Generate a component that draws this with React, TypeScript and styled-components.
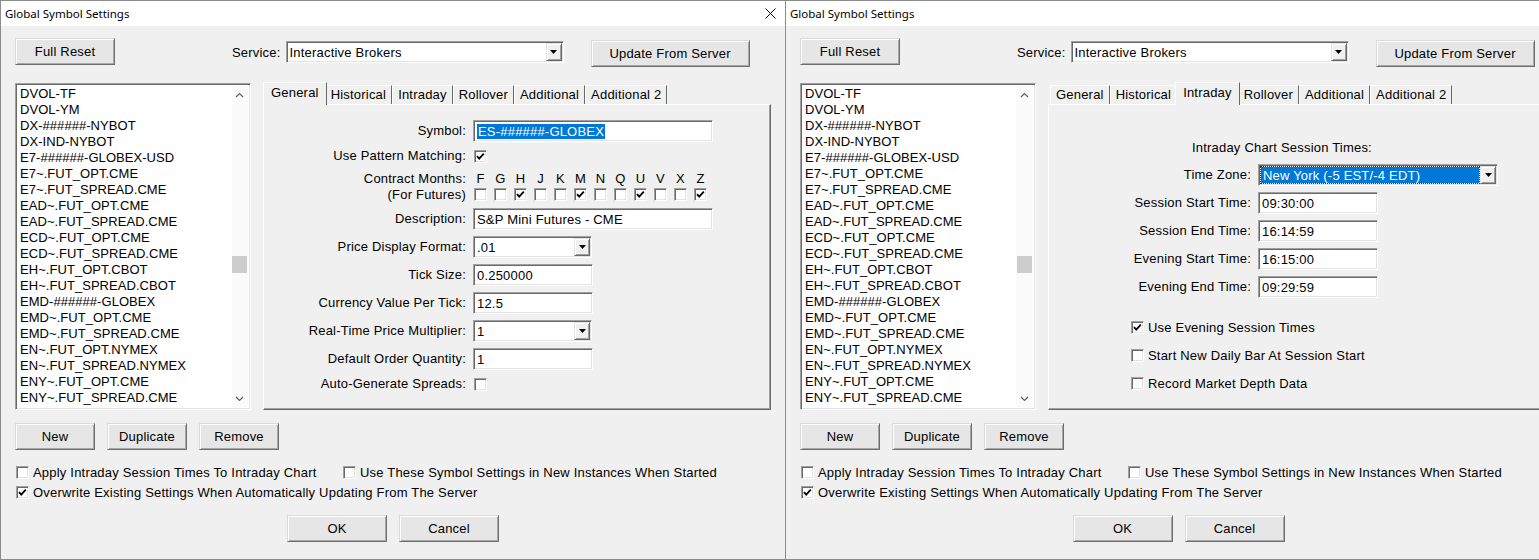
import styled, { createGlobalStyle } from "styled-components";

const GlobalStyle = createGlobalStyle`
  html, body {
    margin: 0;
    padding: 0;
    background: #f0f0f0;
    overflow: hidden;
  }
  body {
    font-family: "Liberation Sans", Arial, sans-serif;
    font-size: 13px;
    letter-spacing: 0.2px;
    color: #000;
  }
`;

const SYMBOLS = [
  "DVOL-TF",
  "DVOL-YM",
  "DX-######-NYBOT",
  "DX-IND-NYBOT",
  "E7-######-GLOBEX-USD",
  "E7~.FUT_OPT.CME",
  "E7~.FUT_SPREAD.CME",
  "EAD~.FUT_OPT.CME",
  "EAD~.FUT_SPREAD.CME",
  "ECD~.FUT_OPT.CME",
  "ECD~.FUT_SPREAD.CME",
  "EH~.FUT_OPT.CBOT",
  "EH~.FUT_SPREAD.CBOT",
  "EMD-######-GLOBEX",
  "EMD~.FUT_OPT.CME",
  "EMD~.FUT_SPREAD.CME",
  "EN~.FUT_OPT.NYMEX",
  "EN~.FUT_SPREAD.NYMEX",
  "ENY~.FUT_OPT.CME",
  "ENY~.FUT_SPREAD.CME",
  "EOE-######-FTA-EUR-23",
];

const TABS = ["General", "Historical", "Intraday", "Rollover", "Additional", "Additional 2"];

const MONTHS = ["F", "G", "H", "J", "K", "M", "N", "Q", "U", "V", "X", "Z"];
const CHECKED_MONTHS = ["H", "M", "U", "Z"];

const Page = styled.div`
  display: flex;
  width: 1539px;
  height: 560px;
  overflow: hidden;
`;

const Window = styled.div<{ $first?: boolean }>`
  flex: 0 0 auto;
  width: 786px;
  height: 560px;
  box-sizing: border-box;
  border: 1px solid #8c8c8c;
  border-left: ${(p) => (p.$first ? "1px solid #8c8c8c" : "none")};
  background: #f0f0f0;
  display: flex;
  flex-direction: column;
`;

const TitleBar = styled.div`
  height: 25px;
  flex: 0 0 auto;
  background: #fff;
  display: flex;
  align-items: center;
  justify-content: space-between;
  padding: 0 9px 0 4px;
  font-family: "Noto Sans", "Liberation Sans", sans-serif;
  font-size: 11.5px;
  letter-spacing: 0;
`;

const CloseIcon = styled.svg`
  width: 11px;
  height: 11px;
  display: block;
`;

const Body = styled.div`
  flex: 1;
  display: flex;
  flex-direction: column;
  padding: 12px 14px 0 14px;
`;

const TopRow = styled.div`
  display: flex;
  align-items: flex-start;
  height: 29px;
`;

const Button = styled.button<{ $w: number; $mt?: number; $ml?: number }>`
  width: ${(p) => p.$w}px;
  height: 27px;
  margin: ${(p) => p.$mt ?? 0}px 0 0 ${(p) => p.$ml ?? 0}px;
  padding: 0;
  flex: 0 0 auto;
  box-sizing: border-box;
  font-family: "Liberation Sans", Arial, sans-serif;
  font-size: 13px;
  letter-spacing: 0.2px;
  color: #000;
  background: #e6e6e6;
  border: 1px solid;
  border-color: #dadada #6e6e6e #6e6e6e #dadada;
  box-shadow: inset 1px 1px #fff, inset -1px -1px #a8a8a8;
`;

const ServiceGroup = styled.div`
  display: flex;
  align-items: center;
  margin: 3px 0 0 117px;
`;

const ServiceLabel = styled.span`
  margin-right: 5px;
`;

const sunken = `
  box-sizing: border-box;
  background: #fff;
  border: 1px solid;
  border-color: #a0a0a0 #fff #fff #a0a0a0;
  box-shadow: inset 1px 1px #696969, inset -1px -1px #e3e3e3;
`;

const Combo = styled.div<{ $w: number; $h?: number }>`
  ${sunken}
  width: ${(p) => p.$w}px;
  height: ${(p) => p.$h ?? 22}px;
  padding: 1px;
  display: flex;
  align-items: stretch;
`;

const ComboText = styled.div`
  flex: 1;
  display: flex;
  align-items: center;
  padding-left: 2px;
  white-space: nowrap;
  overflow: hidden;
`;

const Highlight = styled.span`
  background: #0078d7;
  color: #fff;
  line-height: 15px;
  padding: 0 1px;
`;

const ComboHighlight = styled.div`
  flex: 1;
  display: flex;
  align-items: center;
  margin: 1px;
  padding-left: 2px;
  background: #0078d7;
  color: #fff;
  outline: 1px dotted #333;
  white-space: nowrap;
`;

const ComboButton = styled.div`
  width: 16px;
  flex: 0 0 auto;
  box-sizing: border-box;
  background: #f0f0f0;
  border: 1px solid;
  border-color: #e3e3e3 #696969 #696969 #e3e3e3;
  box-shadow: inset 1px 1px #fff, inset -1px -1px #a0a0a0;
  display: flex;
  align-items: center;
  justify-content: center;
`;

const MainRow = styled.div`
  display: flex;
  align-items: flex-start;
  height: 328px;
  margin-top: 15px;
`;

const ListBox = styled.div`
  ${sunken}
  width: 236px;
  height: 327px;
  margin-top: 1px;
  padding: 2px;
  display: flex;
`;

const ListItems = styled.div`
  flex: 1;
  overflow: hidden;
  padding-left: 2px;
  letter-spacing: 0.05px;
`;

const ListItem = styled.div`
  line-height: 16px;
  height: 16px;
  white-space: nowrap;
`;

const ScrollBar = styled.div`
  width: 17px;
  flex: 0 0 auto;
  display: flex;
  flex-direction: column;
  background: #fbfbfb;
`;

const ScrollArrow = styled.div`
  height: 17px;
  display: flex;
  align-items: center;
  justify-content: center;
`;

const ScrollTrack = styled.div`
  flex: 1;
`;

const ScrollThumb = styled.div<{ $top: number }>`
  margin: ${(p) => p.$top}px 1px 0 1px;
  height: 17px;
  background: #cdcdcd;
`;

const TabControl = styled.div`
  width: 508px;
  height: 328px;
  margin-left: 12px;
  display: flex;
  flex-direction: column;
`;

const TabStrip = styled.div`
  height: 22px;
  display: flex;
  align-items: flex-end;
  padding-left: 2px;
`;

const Tab = styled.div<{ $active?: boolean }>`
  position: relative;
  box-sizing: border-box;
  height: ${(p) => (p.$active ? 23 : 19)}px;
  margin: 0 ${(p) => (p.$active ? -2 : 0)}px ${(p) => (p.$active ? -1 : 0)}px;
  padding: ${(p) => (p.$active ? "2px 7px 0" : "1px 5px 0")};
  z-index: ${(p) => (p.$active ? 1 : 0)};
  background: #f0f0f0;
  border-top: 1px solid #fff;
  border-left: 1px solid #fff;
  border-right: 1px solid #696969;
  line-height: 16px;
  white-space: nowrap;
`;

const TabPanel = styled.div`
  flex: 1;
  box-sizing: border-box;
  border: 1px solid;
  border-color: #fff #696969 #696969 #fff;
  box-shadow: inset -1px -1px #a0a0a0;
  display: flex;
  flex-direction: column;
`;

const PanelContent = styled.div<{ $pt: number }>`
  padding-top: ${(p) => p.$pt}px;
  display: flex;
  flex-direction: column;
`;

const FormRow = styled.div<{ $h: number; $top?: boolean }>`
  display: flex;
  align-items: ${(p) => (p.$top ? "flex-start" : "center")};
  height: ${(p) => p.$h}px;
  flex: 0 0 auto;
`;

const FieldLabel = styled.div<{ $pt?: number }>`
  width: 209px;
  flex: 0 0 auto;
  box-sizing: border-box;
  padding: ${(p) => p.$pt ?? 0}px 7px 0 0;
  text-align: right;
  line-height: 16px;
  white-space: nowrap;
`;

const TextBox = styled.div<{ $w: number }>`
  ${sunken}
  width: ${(p) => p.$w}px;
  height: 22px;
  padding: 0 3px;
  display: flex;
  align-items: center;
  white-space: nowrap;
`;

const CheckBoxBox = styled.div<{ $ml?: number }>`
  ${sunken}
  width: 13px;
  height: 13px;
  flex: 0 0 auto;
  margin-left: ${(p) => p.$ml ?? 0}px;
  display: flex;
  align-items: center;
  justify-content: center;
`;

const MonthGrid = styled.div`
  display: flex;
  padding-top: 3px;
`;

const MonthColumn = styled.div`
  width: 20px;
  display: flex;
  flex-direction: column;
  align-items: flex-start;
`;

const MonthLetter = styled.div`
  width: 13px;
  margin: 0 0 1px 1px;
  text-align: center;
  line-height: 16px;
`;

const Heading = styled.div`
  height: 26px;
  line-height: 26px;
  margin-left: 143px;
`;

const CheckGroup = styled.div`
  margin: 12px 0 0 82px;
  display: flex;
  flex-direction: column;
`;

const CheckRow = styled.label<{ $h: number; $w?: number }>`
  display: flex;
  align-items: center;
  gap: 4px;
  height: ${(p) => p.$h}px;
  ${(p) => (p.$w ? `width: ${p.$w}px;` : "")}
  flex: 0 0 auto;
  white-space: nowrap;
`;

const ButtonRow = styled.div`
  display: flex;
  gap: 12px;
  margin-top: 13px;
`;

const Options = styled.div`
  display: flex;
  flex-direction: column;
  margin-top: 12px;
  padding-left: 1px;
`;

const OptionLine = styled.div`
  display: flex;
`;

const Footer = styled.div`
  display: flex;
  justify-content: center;
  gap: 12px;
  margin-top: 13px;
`;

function Check() {
  return (
    <svg width="9" height="9" viewBox="0 0 9 9">
      <polyline points="1,4.2 3.2,6.6 7.8,1.6" fill="none" stroke="#000" strokeWidth="1.8" />
    </svg>
  );
}

function CheckBox({ checked, ml }: { checked?: boolean; ml?: number }) {
  return <CheckBoxBox $ml={ml}>{checked && <Check />}</CheckBoxBox>;
}

function DropArrow() {
  return (
    <svg width="7" height="4" viewBox="0 0 7 4">
      <polygon points="0,0 7,0 3.5,4" fill="#000" />
    </svg>
  );
}

function Chevron({ up }: { up?: boolean }) {
  return (
    <svg width="9" height="6" viewBox="0 0 9 6">
      <polyline
        points={up ? "1,5 4.5,1.5 8,5" : "1,1 4.5,4.5 8,1"}
        fill="none"
        stroke="#606060"
        strokeWidth="1.2"
      />
    </svg>
  );
}

function ComboBox({ w, value, focused }: { w: number; value: string; focused?: boolean }) {
  return (
    <Combo $w={w}>
      {focused ? <ComboHighlight>{value}</ComboHighlight> : <ComboText>{value}</ComboText>}
      <ComboButton>
        <DropArrow />
      </ComboButton>
    </Combo>
  );
}

function GeneralTab() {
  return (
    <PanelContent $pt={13}>
      <FormRow $h={26}>
        <FieldLabel>Symbol:</FieldLabel>
        <TextBox $w={240}>
          <Highlight>ES-######-GLOBEX</Highlight>
        </TextBox>
      </FormRow>
      <FormRow $h={24}>
        <FieldLabel>Use Pattern Matching:</FieldLabel>
        <CheckBox checked ml={1} />
      </FormRow>
      <FormRow $h={37} $top>
        <FieldLabel $pt={3}>
          Contract Months:
          <br />
          (For Futures)
        </FieldLabel>
        <MonthGrid>
          {MONTHS.map((m) => (
            <MonthColumn key={m}>
              <MonthLetter>{m}</MonthLetter>
              <CheckBox checked={CHECKED_MONTHS.includes(m)} ml={1} />
            </MonthColumn>
          ))}
        </MonthGrid>
      </FormRow>
      <FormRow $h={28}>
        <FieldLabel>Description:</FieldLabel>
        <TextBox $w={240}>S&amp;P Mini Futures - CME</TextBox>
      </FormRow>
      <FormRow $h={28}>
        <FieldLabel>Price Display Format:</FieldLabel>
        <ComboBox w={119} value=".01" />
      </FormRow>
      <FormRow $h={28}>
        <FieldLabel>Tick Size:</FieldLabel>
        <TextBox $w={120}>0.250000</TextBox>
      </FormRow>
      <FormRow $h={28}>
        <FieldLabel>Currency Value Per Tick:</FieldLabel>
        <TextBox $w={120}>12.5</TextBox>
      </FormRow>
      <FormRow $h={28}>
        <FieldLabel>Real-Time Price Multiplier:</FieldLabel>
        <ComboBox w={119} value="1" />
      </FormRow>
      <FormRow $h={28}>
        <FieldLabel>Default Order Quantity:</FieldLabel>
        <TextBox $w={120}>1</TextBox>
      </FormRow>
      <FormRow $h={22}>
        <FieldLabel>Auto-Generate Spreads:</FieldLabel>
        <CheckBox ml={1} />
      </FormRow>
    </PanelContent>
  );
}

const SESSION_FIELDS = [
  ["Session Start Time:", "09:30:00"],
  ["Session End Time:", "16:14:59"],
  ["Evening Start Time:", "16:15:00"],
  ["Evening End Time:", "09:29:59"],
];

function IntradayTab() {
  return (
    <PanelContent $pt={30}>
      <Heading>Intraday Chart Session Times:</Heading>
      <FormRow $h={28}>
        <FieldLabel>Time Zone:</FieldLabel>
        <ComboBox w={240} value="New York (-5 EST/-4 EDT)" focused />
      </FormRow>
      {SESSION_FIELDS.map(([label, value]) => (
        <FormRow $h={28} key={label}>
          <FieldLabel>{label}</FieldLabel>
          <TextBox $w={120}>{value}</TextBox>
        </FormRow>
      ))}
      <CheckGroup>
        <CheckRow $h={28}>
          <CheckBox checked />
          Use Evening Session Times
        </CheckRow>
        <CheckRow $h={28}>
          <CheckBox />
          Start New Daily Bar At Session Start
        </CheckRow>
        <CheckRow $h={28}>
          <CheckBox />
          Record Market Depth Data
        </CheckRow>
      </CheckGroup>
    </PanelContent>
  );
}

function SettingsDialog({ active, first }: { active: string; first?: boolean }) {
  return (
    <Window $first={first}>
      <TitleBar>
        <span>Global Symbol Settings</span>
        {first && (
          <CloseIcon viewBox="0 0 11 11">
            <path d="M0.5 0.5 L10.5 10.5 M10.5 0.5 L0.5 10.5" stroke="#000" strokeWidth="1" />
          </CloseIcon>
        )}
      </TitleBar>
      <Body>
        <TopRow>
          <Button $w={100}>Full Reset</Button>
          <ServiceGroup>
            <ServiceLabel>Service:</ServiceLabel>
            <ComboBox w={278} value="Interactive Brokers" />
          </ServiceGroup>
          <Button $w={159} $mt={2} $ml={27}>
            Update From Server
          </Button>
        </TopRow>
        <MainRow>
          <ListBox>
            <ListItems>
              {SYMBOLS.map((s) => (
                <ListItem key={s}>{s}</ListItem>
              ))}
            </ListItems>
            <ScrollBar>
              <ScrollArrow>
                <Chevron up />
              </ScrollArrow>
              <ScrollTrack>
                <ScrollThumb $top={153} />
              </ScrollTrack>
              <ScrollArrow>
                <Chevron />
              </ScrollArrow>
            </ScrollBar>
          </ListBox>
          <TabControl>
            <TabStrip>
              {TABS.map((t) => (
                <Tab key={t} $active={t === active}>
                  {t}
                </Tab>
              ))}
            </TabStrip>
            <TabPanel>{active === "General" ? <GeneralTab /> : <IntradayTab />}</TabPanel>
          </TabControl>
        </MainRow>
        <ButtonRow>
          <Button $w={80}>New</Button>
          <Button $w={80}>Duplicate</Button>
          <Button $w={80}>Remove</Button>
        </ButtonRow>
        <Options>
          <OptionLine>
            <CheckRow $h={20} $w={327}>
              <CheckBox />
              Apply Intraday Session Times To Intraday Chart
            </CheckRow>
            <CheckRow $h={20}>
              <CheckBox />
              Use These Symbol Settings in New Instances When Started
            </CheckRow>
          </OptionLine>
          <OptionLine>
            <CheckRow $h={20}>
              <CheckBox checked />
              Overwrite Existing Settings When Automatically Updating From The Server
            </CheckRow>
          </OptionLine>
        </Options>
        <Footer>
          <Button $w={100}>OK</Button>
          <Button $w={100}>Cancel</Button>
        </Footer>
      </Body>
    </Window>
  );
}

export default function App() {
  return (
    <>
      <GlobalStyle />
      <Page>
        <SettingsDialog active="General" first />
        <SettingsDialog active="Intraday" />
      </Page>
    </>
  );
}
